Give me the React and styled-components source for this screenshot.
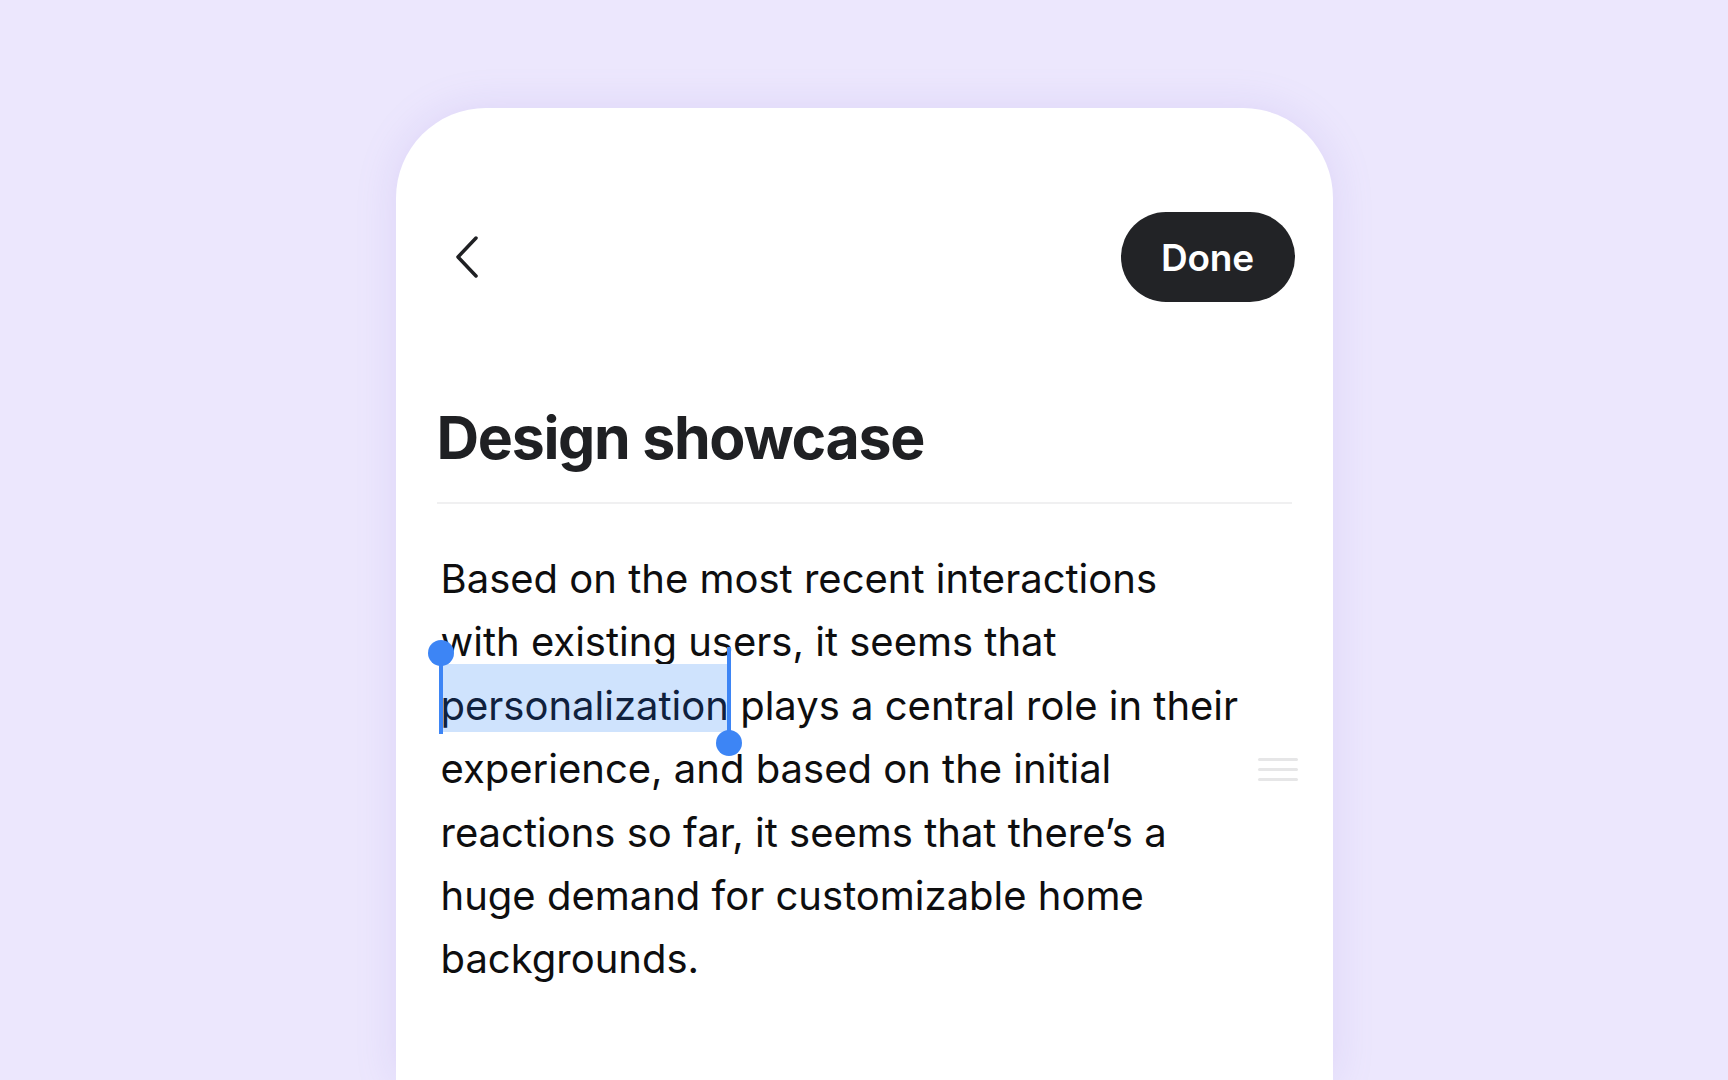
import React from "react";
import styled, { createGlobalStyle } from "styled-components";

const GlobalStyle = createGlobalStyle`
  html, body {
    margin: 0;
    padding: 0;
    background: #ece7fd;
    overflow: hidden;
  }
  body {
    font-family: Inter, "Noto Sans", sans-serif;
  }
`;

const Page = styled.div`
  height: 1080px;
  display: flex;
  justify-content: center;
  padding-top: 108px;
  box-sizing: border-box;
`;

const Card = styled.div`
  width: 937px;
  background: #ffffff;
  border-radius: 90px 90px 0 0;
  box-shadow: 0 0 40px rgba(150, 130, 220, 0.18);
  padding: 104px 38px 0 41px;
  box-sizing: border-box;
`;

const Header = styled.div`
  display: flex;
  align-items: center;
  justify-content: space-between;
`;

const BackButton = styled.button`
  border: none;
  background: none;
  padding: 0;
  margin-left: 17px;
  width: 26px;
  height: 44px;
  display: flex;
  align-items: center;
  justify-content: center;
  cursor: pointer;
`;

const DoneButton = styled.button`
  width: 174px;
  height: 90px;
  border: none;
  border-radius: 45px;
  background: #222326;
  color: #ffffff;
  font-family: Inter, sans-serif;
  font-size: 37px;
  font-weight: 600;
  letter-spacing: -0.2px;
  cursor: pointer;
`;

const Title = styled.h1`
  margin: 100px 0 0;
  font-size: 59px;
  line-height: 71px;
  font-weight: 700;
  color: #1f2023;
  letter-spacing: -1.3px;
`;

const Divider = styled.div`
  height: 2px;
  background: #f0f0f1;
  margin: 29px 0 0;
  width: 855px;
`;

const BodyRow = styled.div`
  display: flex;
  align-items: flex-start;
  justify-content: space-between;
  margin-top: 43px;
`;

const Paragraph = styled.p`
  margin: 0 0 0 4px;
  font-size: 40px;
  line-height: 63.4px;
  color: #0e0e0f;
  letter-spacing: 0px;
`;

const Selected = styled.span`
  position: relative;
  background: #cfe3fd;
  color: #10213d;
  padding: 17px 0 2px;
`;

const HandleBar = styled.span`
  position: absolute;
  width: 4px;
  background: #3d85f5;
  left: ${(p) => (p.side === "start" ? "-2px" : "auto")};
  right: ${(p) => (p.side === "end" ? "-2px" : "auto")};
  top: ${(p) => (p.side === "start" ? "-11px" : "-17px")};
  bottom: ${(p) => (p.side === "start" ? "-2px" : "-11px")};
`;

const HandleKnob = styled.span`
  position: absolute;
  width: 26px;
  height: 26px;
  border-radius: 50%;
  background: #3d85f5;
  left: -11px;
  ${(p) => (p.side === "start" ? "top: -13px;" : "bottom: -13px;")}
`;

const DragHandle = styled.div`
  margin-top: 211px;
  margin-right: -3px;
  display: flex;
  flex-direction: column;
  gap: 7px;
  width: 40px;
`;

const DragLine = styled.span`
  display: block;
  height: 3px;
  border-radius: 2px;
  background: #e6e6e7;
`;

const Handle = ({ side }) => (
  <HandleBar side={side}>
    <HandleKnob side={side} />
  </HandleBar>
);

const ChevronLeft = () => (
  <svg width="24" height="42" viewBox="0 0 24 42" fill="none">
    <path
      d="M21 2 L3 21 L21 40"
      stroke="#1f2023"
      strokeWidth="3.5"
      strokeLinecap="round"
      strokeLinejoin="round"
    />
  </svg>
);

export default function App() {
  return (
    <>
      <GlobalStyle />
      <Page>
        <Card>
          <Header>
            <BackButton aria-label="Back">
              <ChevronLeft />
            </BackButton>
            <DoneButton>Done</DoneButton>
          </Header>
          <Title>Design showcase</Title>
          <Divider />
          <BodyRow>
            <Paragraph>
              Based on the most recent interactions
              <br />
              with existing users, it seems that
              <br />
              <Selected>
                <Handle side="start" />
                personalization
                <Handle side="end" />
              </Selected>{" "}
              plays a central role in their
              <br />
              experience, and based on the initial
              <br />
              reactions so far, it seems that there’s a
              <br />
              huge demand for customizable home
              <br />
              backgrounds.
            </Paragraph>
            <DragHandle>
              <DragLine />
              <DragLine />
              <DragLine />
            </DragHandle>
          </BodyRow>
        </Card>
      </Page>
    </>
  );
}
